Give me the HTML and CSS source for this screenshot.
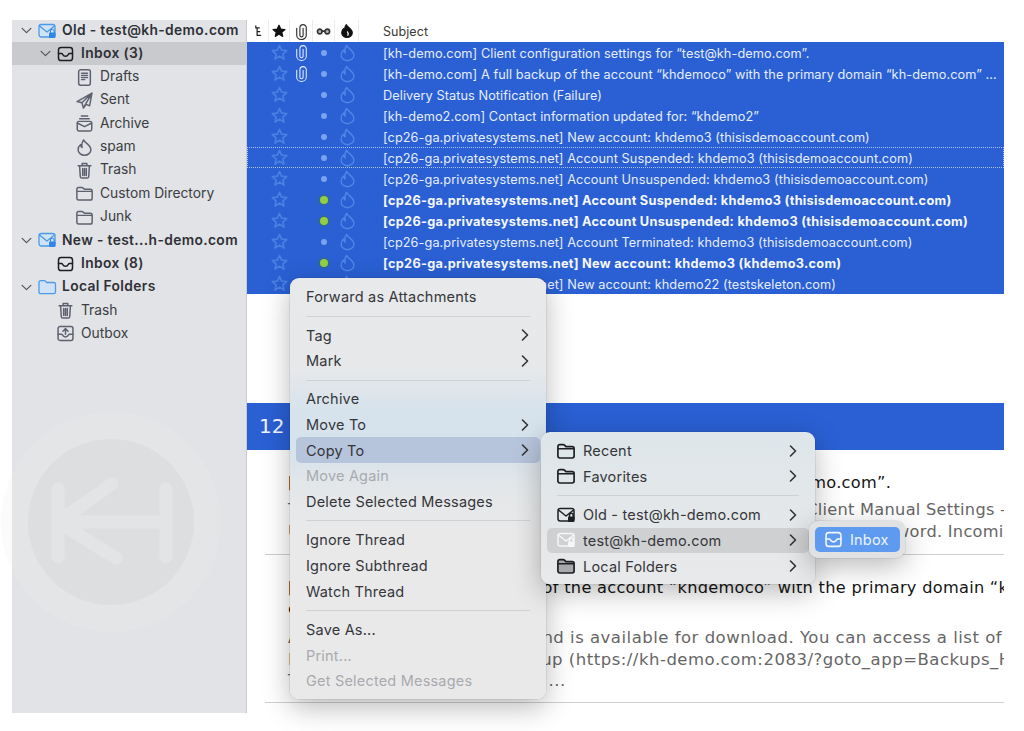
FILE: index.html
```html
<!DOCTYPE html>
<html lang="en">
<head>
<meta charset="utf-8">
<title>Thunderbird</title>
<link rel="stylesheet" href="styles.css">
</head>
<body>
<svg class="sprite" aria-hidden="true">
  <symbol id="i-inbox" viewBox="0 0 16 16"><rect x="1" y="1.500" width="14" height="13" rx="2.600"/><path d="M1 7.600h3.400c.7 0 .9 2.600 3.600 2.600s2.900-2.600 3.600-2.600H15"/></symbol>
  <symbol id="i-draft" viewBox="0 0 16 16"><rect x="2.500" y=".8" width="11" height="14.400" rx="1.800"/><path d="M5.200 4h5.600M5.200 6h5.600M5.200 8h5.600M5.200 10h3"/></symbol>
  <symbol id="i-sent" viewBox="0 0 16 16"><path d="M15 1 1 9l4.600 1.200L7 15l2.600-3.400 3.200 1.400zM15 1 5.600 10.200M15 1 7 15"/></symbol>
  <symbol id="i-archive" viewBox="0 0 16 16"><path d="M5 1h6M3.500 3.500h9"/><rect x="1.200" y="6" width="13.600" height="9" rx="1.600"/><path d="M1.200 7.500 8 11l6.800-3.500"/></symbol>
  <symbol id="i-flame" viewBox="0 0 16 16"><path d="M7.200 .8c.8 3 6.800 4.500 6.800 9.200a6 5.300 0 0 1-12 0c0-2.200 1-3.700 2.300-4.800.1 1.300.6 2.200 1.400 2.800C5.200 5.300 5.700 2.800 7.200 .8z"/></symbol>
  <symbol id="i-flame-head" viewBox="0 0 16 16"><path class="flame-solid" d="M7.200 .8c.8 3 6.800 4.500 6.800 9.200a6 5.300 0 0 1-12 0c0-2.200 1-3.700 2.300-4.800.1 1.300.6 2.200 1.400 2.800C5.200 5.300 5.700 2.800 7.200 .8z"/><path class="flame-notch" d="M8.500 9c1 1 1.200 2.400.5 3.800"/></symbol>
  <symbol id="i-trash" viewBox="0 0 16 16"><path d="M2 3.600h12M5.800 3.600V1.400h4.400v2.200M3.400 3.600l.6 10a1.600 1.600 0 0 0 1.600 1.500h4.800a1.600 1.600 0 0 0 1.600-1.500l.6-10M6.300 6v6.600M8 6v6.600M9.700 6v6.600"/></symbol>
  <symbol id="i-folder" viewBox="0 0 16 16"><path d="M.8 4c0-1 .7-1.700 1.700-1.700h3c.6 0 1 .3 1.400.7l1 1.100h5.600c1 0 1.700.7 1.700 1.700v6.700c0 1-.7 1.700-1.700 1.700H2.500c-1 0-1.700-.7-1.700-1.700zM.8 6h14.400"/></symbol>
  <symbol id="i-outbox" viewBox="0 0 16 16"><rect x="1" y="1.500" width="14" height="13" rx="1.800"/><path d="M1 8.600h3.400c.7 0 .9 2.600 3.600 2.600s2.900-2.600 3.600-2.600H15M8 8.600V3.600M5.600 5.800 8 3.400l2.400 2.400"/></symbol>
  <symbol id="i-star" viewBox="0 0 16 16"><path d="m8 1.400 2 4.400 4.800.5-3.600 3.200 1 4.700L8 11.400l-4.200 2.800 1-4.700L1.200 6.300l4.800-.5z"/></symbol>
  <symbol id="i-clip" viewBox="0 0 16 16"><path d="M3.500 5v6.500a4.500 4 0 0 0 9 0V4.500a3 3 0 0 0-6 0v7a1.500 1.500 0 0 0 3 0V5"/></symbol>
  <symbol id="i-goggles" viewBox="0 0 16 16"><circle class="lens" cx="4" cy="8" r="2.500"/><circle class="lens" cx="12" cy="8" r="2.500"/><path d="M6.500 7.600h3"/></symbol>
  <symbol id="i-thread" viewBox="0 0 16 16"><path d="M5.500 2v2.500h4M7 4.500v8.500h4M7 8.800h3"/></symbol>
  <symbol id="i-chev-r" viewBox="0 0 8 12"><path d="M1.500 1 6.500 6l-5 5"/></symbol>
  <symbol id="i-chev-d" viewBox="0 0 12 8"><path d="M1 1.500 6 6.500l5-5"/></symbol>
</svg>

<div class="app">
  <aside class="sidebar">
    <svg class="watermark" viewBox="0 0 222 222" aria-hidden="true">
      <circle cx="111" cy="111" r="110" class="wm-ring"/>
      <circle cx="111" cy="111" r="83" class="wm-core"/>
      <path class="wm-letters" d="M58 78v68M58 111l54-38M58 111l58 36M58 111h108M166 78v68"/>
    </svg>
    <div class="tree-row account top">
      <svg class="chev"><use href="#i-chev-d"/></svg>
      <svg class="acct-icon" viewBox="0 0 18 16"><rect x="1" y="1.500" width="16" height="12.500" rx="2.200" class="acct-body"/><path d="M1.500 3 9 9l7.500-6" class="acct-flap"/><rect x="11" y="9.500" width="6.500" height="5.500" rx="1" class="acct-lock"/><path d="M12.500 9.500V8a1.800 1.800 0 0 1 3.600 0v1.500" class="acct-shackle"/></svg>
      <span>Old - test@kh-demo.com</span>
    </div>
    <div class="tree-row inbox-row selected">
      <svg class="chev"><use href="#i-chev-d"/></svg>
      <svg class="icon dark"><use href="#i-inbox"/></svg>
      <span>Inbox (3)</span>
    </div>
    <div class="tree-row sub"><svg class="icon"><use href="#i-draft"/></svg><span>Drafts</span></div>
    <div class="tree-row sub"><svg class="icon"><use href="#i-sent"/></svg><span>Sent</span></div>
    <div class="tree-row sub"><svg class="icon"><use href="#i-archive"/></svg><span>Archive</span></div>
    <div class="tree-row sub"><svg class="icon"><use href="#i-flame"/></svg><span>spam</span></div>
    <div class="tree-row sub"><svg class="icon"><use href="#i-trash"/></svg><span>Trash</span></div>
    <div class="tree-row sub"><svg class="icon"><use href="#i-folder"/></svg><span>Custom Directory</span></div>
    <div class="tree-row sub"><svg class="icon"><use href="#i-folder"/></svg><span>Junk</span></div>
    <div class="tree-row account">
      <svg class="chev"><use href="#i-chev-d"/></svg>
      <svg class="acct-icon" viewBox="0 0 18 16"><rect x="1" y="1.500" width="16" height="12.500" rx="2.200" class="acct-body"/><path d="M1.500 3 9 9l7.500-6" class="acct-flap"/><rect x="11" y="9.500" width="6.500" height="5.500" rx="1" class="acct-lock"/><path d="M12.500 9.500V8a1.800 1.800 0 0 1 3.600 0v1.500" class="acct-shackle"/></svg>
      <span>New - test...h-demo.com</span>
    </div>
    <div class="tree-row inbox-row no-chev"><svg class="icon dark"><use href="#i-inbox"/></svg><span>Inbox (8)</span></div>
    <div class="tree-row account">
      <svg class="chev"><use href="#i-chev-d"/></svg>
      <svg class="acct-icon" viewBox="0 0 18 16"><path d="M1 3.500c0-1 .7-1.800 1.700-1.800h3.600c.6 0 1 .3 1.400.7l1 1.100h7c1 0 1.800.7 1.800 1.700v7.800c0 1-.8 1.700-1.800 1.700H2.700c-1 0-1.700-.7-1.700-1.700z" class="acct-body"/></svg>
      <span>Local Folders</span>
    </div>
    <div class="tree-row plain"><svg class="icon"><use href="#i-trash"/></svg><span>Trash</span></div>
    <div class="tree-row plain"><svg class="icon"><use href="#i-outbox"/></svg><span>Outbox</span></div>
  </aside>

  <main class="main">
    <div class="cols head">
      <span class="cell"><svg class="hicon"><use href="#i-thread"/></svg></span>
      <span class="cell"><svg class="hicon solid"><use href="#i-star"/></svg></span>
      <span class="cell"><svg class="hicon tall"><use href="#i-clip"/></svg></span>
      <span class="cell"><svg class="hicon goggles"><use href="#i-goggles"/></svg></span>
      <span class="cell last"><svg class="hicon"><use href="#i-flame-head"/></svg></span>
      <span class="subject">Subject</span>
    </div>
    <div class="list">
      <div class="cols row"><span class="cell"></span><span class="cell"><svg class="star"><use href="#i-star"/></svg></span><span class="cell"><svg class="clip"><use href="#i-clip"/></svg></span><span class="cell"><i class="dot"></i></span><span class="cell"><svg class="flame"><use href="#i-flame"/></svg></span><span class="subject">[kh-demo.com] Client configuration settings for “test@kh-demo.com”.</span></div>
      <div class="cols row"><span class="cell"></span><span class="cell"><svg class="star"><use href="#i-star"/></svg></span><span class="cell"><svg class="clip"><use href="#i-clip"/></svg></span><span class="cell"><i class="dot"></i></span><span class="cell"><svg class="flame"><use href="#i-flame"/></svg></span><span class="subject">[kh-demo.com] A full backup of the account “khdemoco” with the primary domain “kh-demo.com” ...</span></div>
      <div class="cols row"><span class="cell"></span><span class="cell"><svg class="star"><use href="#i-star"/></svg></span><span class="cell"></span><span class="cell"><i class="dot"></i></span><span class="cell"><svg class="flame"><use href="#i-flame"/></svg></span><span class="subject">Delivery Status Notification (Failure)</span></div>
      <div class="cols row"><span class="cell"></span><span class="cell"><svg class="star"><use href="#i-star"/></svg></span><span class="cell"></span><span class="cell"><i class="dot"></i></span><span class="cell"><svg class="flame"><use href="#i-flame"/></svg></span><span class="subject">[kh-demo2.com] Contact information updated for: “khdemo2”</span></div>
      <div class="cols row"><span class="cell"></span><span class="cell"><svg class="star"><use href="#i-star"/></svg></span><span class="cell"></span><span class="cell"><i class="dot"></i></span><span class="cell"><svg class="flame"><use href="#i-flame"/></svg></span><span class="subject">[cp26-ga.privatesystems.net] New account: khdemo3 (thisisdemoaccount.com)</span></div>
      <div class="cols row current"><span class="cell"></span><span class="cell"><svg class="star"><use href="#i-star"/></svg></span><span class="cell"></span><span class="cell"><i class="dot"></i></span><span class="cell"><svg class="flame"><use href="#i-flame"/></svg></span><span class="subject">[cp26-ga.privatesystems.net] Account Suspended: khdemo3 (thisisdemoaccount.com)</span></div>
      <div class="cols row"><span class="cell"></span><span class="cell"><svg class="star"><use href="#i-star"/></svg></span><span class="cell"></span><span class="cell"><i class="dot"></i></span><span class="cell"><svg class="flame"><use href="#i-flame"/></svg></span><span class="subject">[cp26-ga.privatesystems.net] Account Unsuspended: khdemo3 (thisisdemoaccount.com)</span></div>
      <div class="cols row unread"><span class="cell"></span><span class="cell"><svg class="star"><use href="#i-star"/></svg></span><span class="cell"></span><span class="cell"><i class="dot green"></i></span><span class="cell"><svg class="flame"><use href="#i-flame"/></svg></span><span class="subject">[cp26-ga.privatesystems.net] Account Suspended: khdemo3 (thisisdemoaccount.com)</span></div>
      <div class="cols row unread"><span class="cell"></span><span class="cell"><svg class="star"><use href="#i-star"/></svg></span><span class="cell"></span><span class="cell"><i class="dot green"></i></span><span class="cell"><svg class="flame"><use href="#i-flame"/></svg></span><span class="subject">[cp26-ga.privatesystems.net] Account Unsuspended: khdemo3 (thisisdemoaccount.com)</span></div>
      <div class="cols row"><span class="cell"></span><span class="cell"><svg class="star"><use href="#i-star"/></svg></span><span class="cell"></span><span class="cell"><i class="dot"></i></span><span class="cell"><svg class="flame"><use href="#i-flame"/></svg></span><span class="subject">[cp26-ga.privatesystems.net] Account Terminated: khdemo3 (thisisdemoaccount.com)</span></div>
      <div class="cols row unread"><span class="cell"></span><span class="cell"><svg class="star"><use href="#i-star"/></svg></span><span class="cell"></span><span class="cell"><i class="dot green"></i></span><span class="cell"><svg class="flame"><use href="#i-flame"/></svg></span><span class="subject">[cp26-ga.privatesystems.net] New account: khdemo3 (khdemo3.com)</span></div>
      <div class="cols row"><span class="cell"></span><span class="cell"><svg class="star"><use href="#i-star"/></svg></span><span class="cell"></span><span class="cell"><i class="dot"></i></span><span class="cell"><svg class="flame"><use href="#i-flame"/></svg></span><span class="subject">[cp26-ga.privatesystems.net] New account: khdemo22 (testskeleton.com)</span></div>
    </div>
    <div class="preview">
      <div class="count">12</div>
      <div class="msg first">
        <p class="title">[kh-demo.com] Client’s configuration settings for “test@kh-demo.com”.</p>
        <p class="body">The following are the settings for your newer e-mail account: Client Manual Settings –</p>
        <p class="body">Username: test@kh-demo.com Password: Use your email account’s password. Incoming Server</p>
      </div>
      <div class="msg second">
        <p class="title">[kh-demo.com] A new backup of the account “khdemoco” with the primary domain “kh-demo.com”</p>
        <p class="title">completed</p>
        <p class="body">A full back-up is completed and is available for download. You can access a list of backups</p>
        <p class="body">Backups in the cPanel’s Backup (https://kh-demo.com:2083/?goto_app=Backups_Home)</p>
        <p class="body">The backup file is now ready: ...</p>
      </div>
    </div>
  </main>
</div>

<div class="menu main-menu">
  <div class="item">Forward as Attachments</div>
  <hr>
  <div class="item">Tag<svg class="arrow"><use href="#i-chev-r"/></svg></div>
  <div class="item">Mark<svg class="arrow"><use href="#i-chev-r"/></svg></div>
  <hr>
  <div class="item">Archive</div>
  <div class="item">Move To<svg class="arrow"><use href="#i-chev-r"/></svg></div>
  <div class="item active">Copy To<svg class="arrow"><use href="#i-chev-r"/></svg></div>
  <div class="item off">Move Again</div>
  <div class="item">Delete Selected Messages</div>
  <hr>
  <div class="item">Ignore Thread</div>
  <div class="item">Ignore Subthread</div>
  <div class="item">Watch Thread</div>
  <hr>
  <div class="item">Save As...</div>
  <div class="item off">Print...</div>
  <div class="item off">Get Selected Messages</div>
</div>

<div class="menu sub-menu">
  <div class="item"><svg class="micon"><use href="#i-folder"/></svg>Recent<svg class="arrow"><use href="#i-chev-r"/></svg></div>
  <div class="item"><svg class="micon"><use href="#i-folder"/></svg>Favorites<svg class="arrow"><use href="#i-chev-r"/></svg></div>
  <hr>
  <div class="item"><svg class="micon" viewBox="0 0 18 16"><rect x="1" y="1.500" width="16" height="12.500" rx="2.200"/><path d="M1.500 3 9 9l7.500-6"/><rect x="11" y="9.500" width="6.500" height="5.500" rx="1" class="lock-fill"/><path d="M12.500 9.500V8a1.800 1.800 0 0 1 3.600 0v1.500"/></svg>Old - test@kh-demo.com<svg class="arrow"><use href="#i-chev-r"/></svg></div>
  <div class="item hover"><svg class="micon white" viewBox="0 0 18 16"><rect x="1" y="1.500" width="16" height="12.500" rx="2.200"/><path d="M1.500 3 9 9l7.500-6"/><rect x="11" y="9.500" width="6.500" height="5.500" rx="1" class="lock-fill"/><path d="M12.500 9.500V8a1.800 1.800 0 0 1 3.600 0v1.500"/></svg>test@kh-demo.com<svg class="arrow"><use href="#i-chev-r"/></svg></div>
  <div class="item"><svg class="micon filled"><use href="#i-folder"/></svg>Local Folders<svg class="arrow"><use href="#i-chev-r"/></svg></div>
</div>

<div class="menu inbox-menu">
  <div class="item picked"><svg class="micon white"><use href="#i-inbox"/></svg>Inbox</div>
</div>
</body>
</html>
```
FILE: styles.css
```css
* { box-sizing: border-box; }
html, body { margin: 0; height: 100%; background: #fff; overflow: hidden; }
body { padding: 20px 0 0 12px; font-family: Inter, "Liberation Sans", sans-serif; color: #333; }
.sprite { display: none; }
svg { fill: none; stroke: currentColor; stroke-width: 1.3; stroke-linecap: round; stroke-linejoin: round; flex: none; overflow: visible; }

.app { display: flex; width: 992px; height: 693px; }

/* sidebar */
.sidebar { position: relative; width: 235px; flex: none; background: #e1e3e6; border-right: 1px solid #c9cacc; font-size: 13.8px; color: #3c3d42; }
.watermark { position: absolute; left: -12px; top: 391px; width: 222px; height: 222px; stroke: none; }
.wm-ring { fill: rgba(235,235,238,.22); }
.wm-core { fill: #dcdee0; }
.wm-letters { fill: none; stroke: #e2e4e6; stroke-width: 13; }
.tree-row { position: relative; display: flex; align-items: center; height: 23.35px; white-space: nowrap; }
.tree-row span { line-height: 1; }
.tree-row.top { height: 22px; padding-bottom: 1px; }
.chev { width: 11px; height: 7px; color: #55565c; stroke-width: 1.4; }
.icon { width: 17px; height: 17px; color: #5f6170; margin-right: 7px; stroke-width: 1.4; }
.icon.dark { color: #1d1e22; width: 17px; height: 16px; stroke-width: 1.5; }
.account { padding-left: 9px; font-weight: 600; color: #2f3036; letter-spacing: .36px; }
.account .chev { margin-right: 6px; }
.acct-icon { width: 18px; height: 16px; margin-right: 6px; color: #4d9ae8; }
.acct-body { fill: #cfe2f7; stroke: #4d9ae8; }
.acct-flap { stroke: #4d9ae8; }
.acct-lock { fill: #2f86e6; stroke: none; }
.acct-shackle { stroke: #2f86e6; stroke-width: 1; }
.inbox-row { padding-left: 28px; font-weight: 600; color: #2f3036; letter-spacing: .38px; }
.inbox-row .chev { margin-right: 6px; }
.inbox-row.no-chev { padding-left: 45px; }
.selected { background: #c9cacd; }
.sub { padding-left: 64px; }
.plain { padding-left: 45px; }

/* message list */
.main { flex: 1; min-width: 0; display: flex; flex-direction: column; }
.cols { display: grid; grid-template-columns: 22px 21px 23px 22px 24px 1fr; align-items: center; }
.cell { display: flex; align-items: center; justify-content: center; height: 100%; min-width: 0; }
.head { height: 22px; font-size: 12.5px; color: #3a3a3a; width: 755px; }
.head .cell { border-right: 1px solid #ececec; }
.hicon { width: 14px; height: 14px; color: #222; stroke-width: 1.4; }
.hicon.tall { height: 17px; width: 17px; color: #333; stroke-width: 1.1; }
.hicon.solid { fill: #111; stroke: #111; }
.hicon.goggles { width: 15px; height: 15px; color: #333; stroke-width: 1.7; }
.lens { fill: #b5b5b5; }
.flame-solid { fill: #111; stroke: #111; }
.flame-notch { stroke: #fff; stroke-width: 1.5; }
.subject { padding-left: 24px; white-space: nowrap; overflow: hidden; letter-spacing: .06px; }
.list { background: #2a60d4; height: 252px; width: 757px; }
.row { height: 21px; font-size: 12.75px; color: #e6edfb; }
.row .subject { padding-top: 1px; }
.row.unread { font-weight: 700; color: #f6f8fe; }
.row.unread .subject { letter-spacing: .27px; }
.row.current { outline: 1px dotted #a9c2f0; outline-offset: -1px; }
.star { width: 17px; height: 17px; color: #4a80e2; stroke-width: 1.6; }
.clip { width: 17px; height: 17px; color: #e4ecfb; stroke-width: 1; }
.flame { width: 17px; height: 18px; color: #5186e6; stroke-width: 1.3; }
.dot { width: 6px; height: 6px; border-radius: 50%; background: #7ba3ee; }
.dot.green { width: 8px; height: 8px; background: #92cf45; box-shadow: 0 0 2px 1px rgba(70,110,70,.7); }

/* preview pane */
.preview { margin-top: 109px; width: 757px; flex: 1; min-height: 0; font-family: "DejaVu Sans", sans-serif; }
.count { height: 47px; background: #2a60d4; color: #f3f6fd; font-size: 20px; line-height: 47px; padding-left: 12px; }
.msg { margin: 0 0 0 18px; padding-left: 23px; white-space: nowrap; overflow: hidden; }
.msg p { margin: 0; }
.msg.first { height: 105px; padding-top: 22px; border-bottom: 1px solid #cfcfcf; }
.msg.second { height: 148px; padding-top: 22px; border-bottom: 1px solid #cfcfcf; }
.title { font-size: 16.2px; line-height: 21px; color: #151515; letter-spacing: .28px; }
.body { font-size: 16.5px; line-height: 21.5px; color: #666; letter-spacing: .5px; }
.msg.first .body { font-size: 16.2px; letter-spacing: .28px; }
.title + .body { margin-top: 6px; }
.msg.second .title + .body { margin-top: 8px; }

/* context menus */
.menu { position: absolute; border-radius: 9px; font-size: 14.5px; letter-spacing: .2px; color: #35363a; box-shadow: 0 8px 28px rgba(0,0,0,.28), 0 0 0 1px rgba(0,0,0,.06); }
.menu hr { height: 1px; border: 0; background: #cfd1d3; margin: 6px 16px 5.6px; }
.item { display: flex; align-items: center; height: 25.67px; padding: 0 11px 0 10px; margin: 0 6px; border-radius: 5px; white-space: nowrap; }
.arrow { width: 8px; height: 12px; margin-left: auto; color: #333; stroke-width: 1.6; }
.item.off { color: #a9aaae; }
.item.active { background: #b6c4dc; }
.item.hover { background: #cfd0d2; }
.main-menu { left: 290px; top: 278px; width: 256px; height: 421px; padding: 6px 0; background: linear-gradient(180deg, #e8e9ea 0%, #e6e8ea 22%, #d6e2ec 32%, #d6e2ec 41%, #e4e7e9 50%, #e9e9ea 60%, #e9e9ea 100%); }
.sub-menu { left: 541px; top: 432px; width: 274px; height: 152px; padding: 6px 0; background: linear-gradient(180deg, #dde6ea 0%, #e3e7e9 45%, #e8e9ea 100%); }
.sub-menu .item { padding-right: 12px; }
.micon { width: 18px; height: 18px; margin-right: 8px; color: #1e1f23; stroke-width: 1.5; }
.micon.white { color: #f5f6f8; }
.micon.filled { fill: #a8a9ab; }
.lock-fill { fill: currentColor; stroke: none; }
.inbox-menu { left: 809px; top: 521px; width: 96px; height: 37px; padding: 6px 0; background: #dfe1e3; }
.inbox-menu .item { margin: 0 5px 0 6px; height: 25px; padding: 0 10px; background: #5e9bf0; color: #eef4fe; }
.inbox-menu .micon { width: 17px; height: 17px; margin-right: 8px; }
```
